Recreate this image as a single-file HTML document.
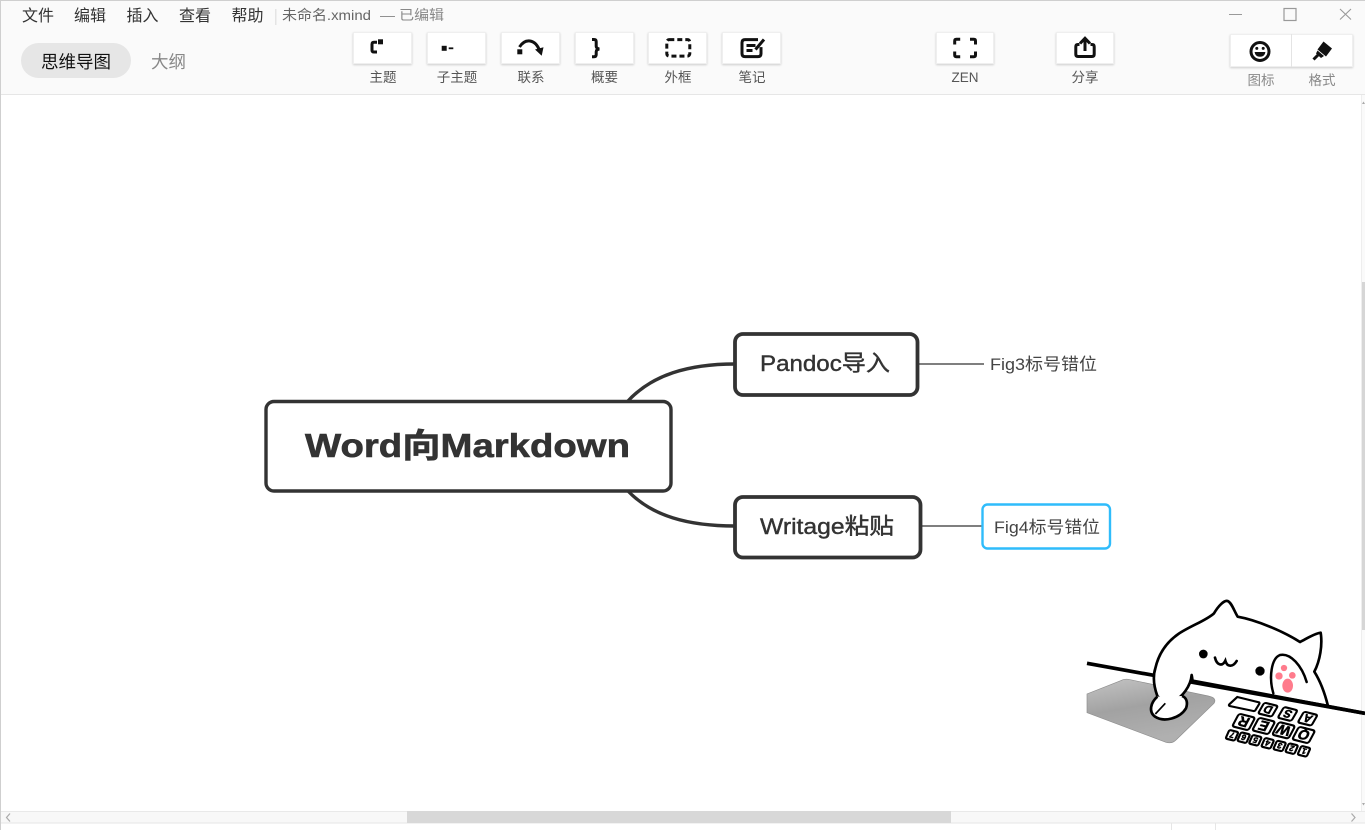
<!DOCTYPE html>
<html lang="zh">
<head>
<meta charset="utf-8">
<title>未命名.xmind</title>
<style>
html,body{margin:0;padding:0;background:#fff;width:1365px;height:830px;overflow:hidden}
svg{display:block;position:absolute;left:0;top:0}
text{font-family:"Liberation Sans","Noto Sans CJK SC",sans-serif}
.menu{font-size:16px;fill:#333}
.lab{font-size:13.5px;fill:#555;text-anchor:middle}
.lab2{font-size:13.5px;fill:#888;text-anchor:middle}
.ic{fill:none;stroke:#111;stroke-width:3}
.key{fill:#fff;stroke:#000;stroke-width:6.5}
.kt{font-weight:bold;fill:#000;stroke:#000;stroke-width:1.5;text-anchor:middle}
</style>
</head>
<body>
<svg width="1365" height="830" viewBox="0 0 1365 830" xmlns="http://www.w3.org/2000/svg">
<defs>
<filter id="sh" x="-10%" y="-10%" width="120%" height="125%"><feDropShadow dx="0" dy="1" stdDeviation="1" flood-color="#000" flood-opacity=".18"/></filter>
<linearGradient id="pad" x1="0" y1="0" x2="0.35" y2="1"><stop offset="0" stop-color="#c4c4c4"/><stop offset=".5" stop-color="#a2a2a2"/><stop offset="1" stop-color="#b0b0b0"/></linearGradient>
</defs>

<!-- toolbar -->
<rect x="0" y="0" width="1365" height="94" fill="#fafafa"/>
<rect x="0" y="94" width="1365" height="1" fill="#e6e6e6"/>
<rect x="0" y="0" width="1365" height="1" fill="#cfcfcf"/>
<rect x="0" y="0" width="1" height="830" fill="#cfcfcf"/>

<text class="menu" x="22" y="21">文件</text>
<text class="menu" x="74" y="21">编辑</text>
<text class="menu" x="126.5" y="21">插入</text>
<text class="menu" x="179" y="21">查看</text>
<text class="menu" x="231.5" y="21">帮助</text>
<rect x="275" y="9" width="1.5" height="16" fill="#e4e4e4"/>
<text x="282" y="20" font-size="14" fill="#666" textLength="89" lengthAdjust="spacingAndGlyphs">未命名.xmind</text>
<text x="380" y="20" font-size="14" fill="#888" textLength="64" lengthAdjust="spacingAndGlyphs">— 已编辑</text>

<rect x="21" y="43" width="110" height="35" rx="17.5" fill="#e6e6e6"/>
<text x="41" y="68" font-size="17.5" fill="#111">思维导图</text>
<text x="151" y="68" font-size="17.5" fill="#888">大纲</text>

<g fill="#fff" stroke="#efefef" stroke-width="1" filter="url(#sh)">
<rect x="353.5" y="32.5" width="58" height="31"/>
<rect x="427.5" y="32.5" width="58" height="31"/>
<rect x="501.5" y="32.5" width="58" height="31"/>
<rect x="575.5" y="32.5" width="58" height="31"/>
<rect x="648.5" y="32.5" width="58" height="31"/>
<rect x="722.5" y="32.5" width="58" height="31"/>
<rect x="936.5" y="32.5" width="57" height="31"/>
<rect x="1056.5" y="32.5" width="57" height="31"/>
<rect x="1230.5" y="34.5" width="122" height="32"/>
</g>
<rect x="1291" y="34" width="1" height="33" fill="#e4e4e4"/>

<text class="lab" x="383" y="82">主题</text>
<text class="lab" x="457" y="82">子主题</text>
<text class="lab" x="531" y="82">联系</text>
<text class="lab" x="604.5" y="82">概要</text>
<text class="lab" x="678" y="82">外框</text>
<text class="lab" x="752" y="82">笔记</text>
<text class="lab" x="965" y="82">ZEN</text>
<text class="lab" x="1085" y="82">分享</text>
<text class="lab2" x="1261" y="85">图标</text>
<text class="lab2" x="1322" y="85">格式</text>

<!-- topic -->
<path class="ic" d="M377 42.2H374q-2 0-2 2v6q0 1.8 2 1.8h3" stroke-width="2.8"/>
<rect x="378" y="39.3" width="5" height="5" fill="#111"/>
<!-- subtopic -->
<rect x="441.7" y="45.8" width="5" height="5" fill="#111"/>
<rect x="448.7" y="47.4" width="4.6" height="1.8" fill="#111"/>
<!-- relationship -->
<rect x="517.3" y="49.3" width="5" height="5" fill="#111"/>
<path class="ic" d="M519.5 47C523 41.5 527 40.6 530 41C534 41.6 537.5 45 539.5 50.5"/>
<path d="M535 49.5L543.5 47.3L541.7 55.8Z" fill="#111"/>
<!-- summary -->
<path class="ic" d="M592 39.5h2q2.2 0 2.2 2.2v4.6q0 2 3 2.7q-3 .7-3 2.7v2.8q0 2.2-2.2 2.2h-2" stroke-width="3"/>
<!-- boundary -->
<rect class="ic" x="666.8" y="39.6" width="23" height="16.5" rx="2.5" stroke-width="3" stroke-dasharray="5 3"/>
<!-- note -->
<path class="ic" d="M758 39.6H745q-3 0-3 3v11q0 3 3 3h13q3 0 3-3v-6.5" stroke-width="3"/>
<path class="ic" d="M746.5 45.5h9M746.5 50.5h6" stroke-width="2.4"/>
<path class="ic" d="M755.5 49.5L764 39.5" stroke-width="3"/>
<!-- zen -->
<path class="ic" d="M954.7 44.5V41q0-1.7 1.7-1.7h3.8M970 39.3h3.8q1.7 0 1.7 1.7v3.5M954.7 51.5V55q0 1.7 1.7 1.7h3.8M970 56.7h3.8q1.7 0 1.7-1.7v-3.5" stroke-width="3"/>
<!-- share -->
<path class="ic" d="M1079.5 44.5H1078q-2.2 0-2.2 2.2v7.6q0 2.2 2.2 2.2h14q2.2 0 2.2-2.2v-7.6q0-2.2-2.2-2.2h-1.5" stroke-width="2.6"/>
<path class="ic" d="M1085 51V39M1080 43.5l5-5.2l5 5.2" stroke-width="2.6"/>
<!-- smile -->
<circle class="ic" cx="1260" cy="51.5" r="9" stroke-width="2.4"/>
<circle cx="1256.8" cy="48.4" r="1.5" fill="#111"/>
<circle cx="1263.2" cy="48.4" r="1.5" fill="#111"/>
<path d="M1254.6 52h10.8q-.6 4.8-5.4 4.8t-5.4-4.8z" fill="#111"/>
<!-- brush -->
<path d="M1323.5 41.5L1332 48.5L1326 56.5L1317.5 49.5Z" fill="#111"/>
<path d="M1317.5 50.5L1324 56L1321 58L1316 53.5Z" fill="#111"/>
<path d="M1318 55L1313.5 59.5" stroke="#111" stroke-width="3" fill="none"/>

<!-- window controls -->
<rect x="1229" y="14" width="13" height="1" fill="#999"/>
<rect x="1284" y="8.5" width="12" height="12" fill="none" stroke="#999" stroke-width="1.2"/>
<path d="M1340 9l11 10.5M1351 9l-11 10.5" stroke="#999" stroke-width="1.1" fill="none"/>

<!-- map connectors -->
<g fill="none" stroke="#333">
<path d="M628 401C652 375 688 364 735 364" stroke-width="3.4"/>
<path d="M628 491C652 516 688 526 735 526" stroke-width="3.4"/>
<path d="M918 364H984" stroke-width="1.3"/>
<path d="M921 526H984" stroke-width="1.3"/>
</g>

<!-- central topic -->
<rect x="266" y="401.5" width="405" height="89.5" rx="8" fill="#fff" stroke="#333" stroke-width="3.4"/>
<text x="305" y="457" font-size="33" font-weight="bold" fill="#333" stroke="#333" stroke-width=".6" textLength="325" lengthAdjust="spacingAndGlyphs">Word向Markdown</text>

<!-- subtopics -->
<rect x="735" y="334" width="182.5" height="61" rx="8" fill="#fff" stroke="#333" stroke-width="3.8"/>
<text x="760" y="371" font-size="22.5" fill="#333" stroke="#333" stroke-width=".4" textLength="130" lengthAdjust="spacingAndGlyphs">Pandoc导入</text>
<rect x="735" y="497" width="185.5" height="60.5" rx="8" fill="#fff" stroke="#333" stroke-width="3.8"/>
<text x="760" y="534" font-size="22.5" fill="#333" stroke="#333" stroke-width=".4" textLength="134" lengthAdjust="spacingAndGlyphs">Writage粘贴</text>

<text x="990" y="370" font-size="17" fill="#444" textLength="107" lengthAdjust="spacingAndGlyphs">Fig3标号错位</text>
<rect x="982.5" y="504.5" width="127.5" height="44" rx="5" fill="#fff" stroke="#2fbcfb" stroke-width="2.4"/>
<text x="994" y="533" font-size="17" fill="#444" textLength="106" lengthAdjust="spacingAndGlyphs">Fig4标号错位</text>

<!-- vertical scrollbar -->
<rect x="1361" y="95" width="4" height="716" fill="#fafafa"/>
<rect x="1361" y="95" width="1" height="716" fill="#eee"/>
<rect x="1362" y="282" width="3" height="348" fill="#d6d6d6"/>
<path d="M1362 104l1.5-2.5l1.5 2.5z" fill="#aaa"/>
<path d="M1362 803l1.5 2.5l1.5-2.5z" fill="#aaa"/>

<!-- cat (coordinates in 3x space) -->
<g transform="translate(1080 590) scale(.33333)">
<path d="M21 364V312L122 272Q132 266 145 268L385 318Q412 324 402 340L288 450Q276 462 258 457L21 368Z" fill="url(#pad)" stroke="#8e8e8e" stroke-width="2"/>
<path d="M21 220L855 370" stroke="#000" stroke-width="11" fill="none"/>

<path d="M232 318C222 290 218 260 226 235C236 190 262 155 295 132C330 108 378 92 402 70C415 48 432 30 443 33C455 38 462 62 473 80C530 90 612 125 660 156C680 146 704 130 722 128C728 165 720 212 703 245C722 275 735 312 744 348L338 274C336 262 336 258 335 255C332 290 305 322 285 330C265 336 245 332 232 318Z" fill="#fff" stroke="#000" stroke-width="8" stroke-linejoin="round"/>
<path d="M232 320C212 338 205 365 225 380C252 398 300 385 318 355C325 335 318 322 306 318" fill="#fff" stroke="#000" stroke-width="8"/>
<path d="M226 372L256 340" stroke="#000" stroke-width="5" fill="none"/>
<path d="M336 273L855 370" stroke="#000" stroke-width="11" fill="none"/>

<circle cx="370" cy="192" r="13" fill="#000"/>
<circle cx="540" cy="243" r="14" fill="#000"/>
<path d="M405 203C410 224 426 232 436 212C442 234 460 230 470 213" fill="none" stroke="#000" stroke-width="8" stroke-linecap="round"/>
<path d="M580 310C566 262 574 205 600 195C632 188 666 228 680 276" fill="none" stroke="#000" stroke-width="7.5" stroke-linecap="round"/>
<g fill="#ff7b8c">
<circle cx="612" cy="234" r="9.5"/>
<circle cx="597" cy="258" r="11"/>
<circle cx="637" cy="256" r="10"/>
<ellipse cx="623" cy="287" rx="16" ry="21"/>
</g>

<!-- keyboard -->
<path class="key" d="M472 321L537 337Q540 339 537 343L526 361Q524 364 520 363L449 348Q445 346 448 343Z"/>
<g font-size="34">
<g transform="translate(564 359) rotate(14) skewX(-16)"><rect class="key" x="-21" y="-18" width="42" height="36" rx="6"/><text class="kt" transform="rotate(180)" y="12">D</text></g>
<g transform="translate(623 372) rotate(14) skewX(-16)"><rect class="key" x="-21" y="-18" width="42" height="36" rx="6"/><text class="kt" transform="rotate(180)" y="12">S</text></g>
<g transform="translate(683 386) rotate(14) skewX(-16)"><rect class="key" x="-21" y="-18" width="42" height="36" rx="6"/><text class="kt" transform="rotate(180)" y="12">A</text></g>
</g>
<g font-size="42">
<g transform="translate(491 396) rotate(14) skewX(-14)"><rect class="key" x="-25" y="-21" width="50" height="42" rx="7"/><text class="kt" transform="rotate(180)" y="15">R</text></g>
<g transform="translate(551 408) rotate(14) skewX(-14)"><rect class="key" x="-25" y="-21" width="50" height="42" rx="7"/><text class="kt" transform="rotate(180)" y="15">E</text></g>
<g transform="translate(611 421) rotate(14) skewX(-14)"><rect class="key" x="-25" y="-21" width="50" height="42" rx="7"/><text class="kt" transform="rotate(180)" y="15">W</text></g>
<g transform="translate(671 435) rotate(14) skewX(-14)"><rect class="key" x="-25" y="-21" width="50" height="42" rx="7"/><text class="kt" transform="rotate(180)" y="15">Q</text></g>
</g>
<g font-size="24">
<g transform="translate(456 436) rotate(14) skewX(-10)"><rect class="key" x="-14" y="-14" width="28" height="28" rx="5"/><text class="kt" transform="rotate(180)" y="9">7</text></g>
<g transform="translate(491 443) rotate(14) skewX(-10)"><rect class="key" x="-14" y="-14" width="28" height="28" rx="5"/><text class="kt" transform="rotate(180)" y="9">6</text></g>
<g transform="translate(526 451) rotate(14) skewX(-10)"><rect class="key" x="-14" y="-14" width="28" height="28" rx="5"/><text class="kt" transform="rotate(180)" y="9">5</text></g>
<g transform="translate(563 460) rotate(14) skewX(-10)"><rect class="key" x="-14" y="-14" width="28" height="28" rx="5"/><text class="kt" transform="rotate(180)" y="9">4</text></g>
<g transform="translate(599 468) rotate(14) skewX(-10)"><rect class="key" x="-14" y="-14" width="28" height="28" rx="5"/><text class="kt" transform="rotate(180)" y="9">3</text></g>
<g transform="translate(635 476) rotate(14) skewX(-10)"><rect class="key" x="-14" y="-14" width="28" height="28" rx="5"/><text class="kt" transform="rotate(180)" y="9">2</text></g>
<g transform="translate(672 484) rotate(14) skewX(-10)"><rect class="key" x="-14" y="-14" width="28" height="28" rx="5"/><text class="kt" transform="rotate(180)" y="9">1</text></g>
</g>
</g>

<!-- horizontal scrollbar -->
<rect x="1" y="811" width="1364" height="12" fill="#f8f8f8"/>
<rect x="1" y="811" width="1364" height="1" fill="#e9e9e9"/>
<rect x="1" y="822.5" width="1364" height="1" fill="#e6e6e6"/>
<rect x="407" y="811" width="544" height="12" fill="#d8d8d8"/>
<path d="M10 813.5L6.5 817.5L10 821.5" fill="none" stroke="#aaa" stroke-width="1.2"/>
<path d="M1351.5 813.5L1355 817.5L1351.5 821.5" fill="none" stroke="#aaa" stroke-width="1.2"/>

<!-- status bar remnants -->
<rect x="1171" y="823" width="1" height="7" fill="#e6e6e6"/>
<rect x="1215" y="823" width="1" height="7" fill="#e6e6e6"/>
</svg>
</body>
</html>
